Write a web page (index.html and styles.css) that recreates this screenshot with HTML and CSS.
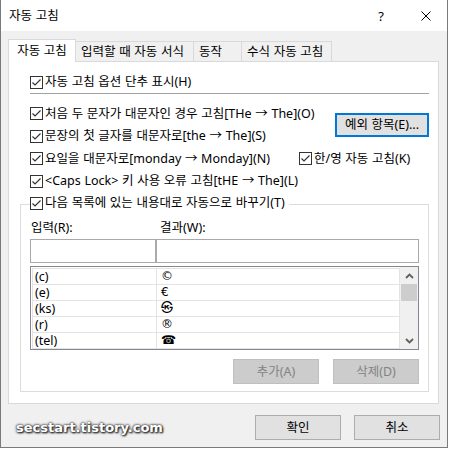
FILE: index.html
```html
<!DOCTYPE html>
<html lang="ko">
<head>
<meta charset="utf-8">
<title>자동 고침</title>
<link rel="stylesheet" href="styles.css">
</head>
<body>
<div class="window">
  <div class="titlebar">
    <span class="title">자동 고침</span>
    <span class="help">?</span>
    <svg class="close" width="10" height="10" viewBox="0 0 10 10"><path d="M0.5 0.5 L9.5 9.5 M9.5 0.5 L0.5 9.5" stroke="#000" stroke-width="1" fill="none"/></svg>
  </div>
  <div class="content">
    <div class="tabs">
      <div class="tab active">자동 고침</div>
      <div class="tab t2">입력할 때 자동 서식</div>
      <div class="tab t3">동작</div>
      <div class="tab t4">수식 자동 고침</div>
    </div>
    <div class="panel">
      <label class="cb r1"><svg class="box" width="13" height="13" viewBox="0 0 13 13"><rect x="0.5" y="0.5" width="12" height="12" fill="#fff" stroke="#333"/><path d="M2.5 6.5 L5 9 L10.5 3.5" stroke="#333" stroke-width="1.2" fill="none"/></svg><span>자동 고침 옵션 단추 표시(H)</span></label>
      <div class="sep"></div>
      <div class="pair">
        <div class="col">
          <label class="cb h23"><svg class="box" width="13" height="13" viewBox="0 0 13 13"><rect x="0.5" y="0.5" width="12" height="12" fill="#fff" stroke="#333"/><path d="M2.5 6.5 L5 9 L10.5 3.5" stroke="#333" stroke-width="1.2" fill="none"/></svg><span>처음 두 문자가 대문자인 경우 고침[THe → The](O)</span></label>
          <label class="cb h22"><svg class="box" width="13" height="13" viewBox="0 0 13 13"><rect x="0.5" y="0.5" width="12" height="12" fill="#fff" stroke="#333"/><path d="M2.5 6.5 L5 9 L10.5 3.5" stroke="#333" stroke-width="1.2" fill="none"/></svg><span>문장의 첫 글자를 대문자로[the → The](S)</span></label>
        </div>
        <button class="btn-exc">예외 항목(E)...</button>
      </div>
      <div class="row4">
        <label class="cb h23"><svg class="box" width="13" height="13" viewBox="0 0 13 13"><rect x="0.5" y="0.5" width="12" height="12" fill="#fff" stroke="#333"/><path d="M2.5 6.5 L5 9 L10.5 3.5" stroke="#333" stroke-width="1.2" fill="none"/></svg><span>요일을 대문자로[monday → Monday](N)</span></label>
        <label class="cb h23 hanyoung"><svg class="box" width="13" height="13" viewBox="0 0 13 13"><rect x="0.5" y="0.5" width="12" height="12" fill="#fff" stroke="#333"/><path d="M2.5 6.5 L5 9 L10.5 3.5" stroke="#333" stroke-width="1.2" fill="none"/></svg><span>한/영 자동 고침(K)</span></label>
      </div>
      <label class="cb h22"><svg class="box" width="13" height="13" viewBox="0 0 13 13"><rect x="0.5" y="0.5" width="12" height="12" fill="#fff" stroke="#333"/><path d="M2.5 6.5 L5 9 L10.5 3.5" stroke="#333" stroke-width="1.2" fill="none"/></svg><span>&lt;Caps Lock&gt; 키 사용 오류 고침[tHE → The](L)</span></label>
      <div class="group">
        <label class="cb legend"><svg class="box" width="13" height="13" viewBox="0 0 13 13"><rect x="0.5" y="0.5" width="12" height="12" fill="#fff" stroke="#333"/><path d="M2.5 6.5 L5 9 L10.5 3.5" stroke="#333" stroke-width="1.2" fill="none"/></svg><span>다음 목록에 있는 내용대로 자동으로 바꾸기(T)</span></label>
        <div class="labels"><span class="lbl1">입력(R):</span><span>결과(W):</span></div>
        <div class="inputs"><div class="in in1"></div><div class="in in2"></div></div>
        <div class="list">
          <div class="table">
            <div class="trow"><span class="c1">(c)</span><span class="c2">©</span></div>
            <div class="trow"><span class="c1">(e)</span><span class="c2">€</span></div>
            <div class="trow"><span class="c1">(ks)</span><span class="c2">㉿</span></div>
            <div class="trow"><span class="c1">(r)</span><span class="c2">®</span></div>
            <div class="trow"><span class="c1">(tel)</span><span class="c2">☎</span></div>
          </div>
          <div class="scroll">
            <div class="arrow"><svg width="9" height="6" viewBox="0 0 9 6"><path d="M1 5 L4.5 1.5 L8 5" stroke="#606060" stroke-width="1.8" fill="none"/></svg></div>
            <div class="thumb"></div>
            <div class="track"></div>
            <div class="arrow"><svg width="9" height="6" viewBox="0 0 9 6"><path d="M1 1 L4.5 4.5 L8 1" stroke="#606060" stroke-width="1.8" fill="none"/></svg></div>
          </div>
        </div>
        <div class="gbtns">
          <button class="btn dis add">추가(A)</button>
          <button class="btn dis">삭제(D)</button>
        </div>
      </div>
    </div>
    <div class="footer">
      <span class="wm">secstart.tistory.com</span>
      <button class="btn ok">확인</button>
      <button class="btn cancel">취소</button>
    </div>
  </div>
</div>
</body>
</html>
```
FILE: styles.css
```css
* { box-sizing: border-box; margin: 0; padding: 0; }
html, body { width: 449px; height: 449px; background: #fff; overflow: hidden; }
body {
  font-family: "Noto Sans", "Noto Sans CJK KR", sans-serif;
  font-size: 12.5px;
  line-height: 16px;
  word-spacing: 0.4px;
  color: #000;
}
button { font: inherit; color: inherit; word-spacing: inherit; }

.window {
  width: 448px;
  height: 448px;
  border: 1px solid #7a7a7a;
  border-top: none;
  background: #f0f0f0;
  display: flex;
  flex-direction: column;
}
.titlebar {
  height: 31px;
  flex: none;
  background: #fff;
  display: flex;
  align-items: center;
  padding-left: 8px;
}
.title { flex: 1; }
.help { width: 12px; text-align: center; margin-right: 34px; font-size: 13px; }
.close { margin-right: 16px; }

.content { padding: 8px 8px 0 7px; }

.tabs {
  display: flex;
  align-items: flex-end;
  height: 22px;
  position: relative;
  z-index: 1;
}
.tab {
  height: 20px;
  border: 1px solid #d9d9d9;
  border-bottom: none;
  background: #f0f0f0;
  margin-left: -1px;
  padding-left: 5px;
  display: flex;
  align-items: center;
  white-space: nowrap;
}
.tab.active {
  width: 68px;
  height: 23px;
  margin-left: 0;
  margin-bottom: -1px;
  background: #fff;
  padding-left: 0;
  justify-content: center;
  position: relative;
  z-index: 2;
}
.t2 { width: 119px; }
.t3 { width: 49px; }
.t4 { width: 91px; }

.panel {
  width: 431px;
  height: 343px;
  border: 1px solid #d9d9d9;
  background: #fff;
  padding: 9px 9px 0 11px;
}

.cb {
  display: flex;
  align-items: center;
  gap: 2px;
  white-space: nowrap;
}
.box { flex: none; }
.r1 { height: 22px; margin-left: 10px; }
.h22 { height: 22px; margin-left: 10px; }
.h23 { height: 23px; margin-left: 10px; }
.sep { height: 1px; background: #a0a0a0; margin: 0 0 8px 10px; }

.pair { display: flex; align-items: flex-start; }
.col { flex: 1; }
.btn-exc {
  width: 94px;
  height: 24px;
  margin-top: 11px;
  border: 2px solid #0078d7;
  background: #e1e1e1;
}

.row4 { display: grid; grid-template-columns: 279px auto; }
.row4 .hanyoung { margin-left: 0; }

.group {
  margin-top: 12px;
  border: 1px solid #dcdcdc;
  padding: 0 9px 7px 9px;
}
.legend {
  height: 22px;
  margin-top: -13px;
  width: fit-content;
  background: #fff;
  padding-right: 4px;
}
.labels { display: flex; height: 16px; margin-top: 6px; }
.lbl1 { width: 130px; padding-left: 1px; }

.inputs { display: flex; margin-top: 3px; }
.in { height: 24px; border: 1px solid #a9a9a9; background: #fff; }
.in1 { width: 126px; }
.in2 { width: 263px; }

.list {
  margin-top: 3px;
  height: 84px;
  border: 1px solid #828790;
  display: flex;
}
.table {
  width: 369px;
  padding: 1px 0 0 1px;
}
.trow {
  display: flex;
  height: 16px;
  border-top: 1px solid #e3e3e3;
}
.trow:last-child { height: 17px; border-bottom: 1px solid #e3e3e3; }
.trow span { line-height: 15px; }
.c1 { width: 125px; padding-left: 2px; border-left: 1px solid #e3e3e3; border-right: 1px solid #e3e3e3; }
.c2 {
  flex: 1;
  padding-left: 4px;
  border-right: 1px solid #e3e3e3;
  font-family: "DejaVu Sans", "Noto Sans CJK KR", sans-serif;
  font-size: 12px;
}

.scroll {
  flex: 1;
  background: #f0f0f0;
  display: flex;
  flex-direction: column;
}
.arrow { height: 17px; display: flex; align-items: center; justify-content: center; }
.thumb { height: 17px; margin: 0 1px; background: #cdcdcd; }
.track { flex: 1; }

.gbtns { display: flex; justify-content: flex-end; gap: 14px; margin-top: 9px; }
.btn {
  width: 86px;
  height: 25px;
  border: 1px solid #adadad;
  background: #e1e1e1;
}
.btn.dis { background: #cccccc; border-color: #bfbfbf; color: #838383; }

.footer {
  display: flex;
  align-items: center;
  margin-top: 11px;
}
.wm {
  margin-left: 8px;
  margin-right: auto;
  font-family: "DejaVu Sans", sans-serif;
  font-weight: bold;
  font-size: 13px;
  word-spacing: 0;
  color: #fff;
  text-shadow: 0 0 2px #333, 0 0 3px #333, 1px 1px 2px #000;
}
.ok { margin-right: 13px; }
.cancel { margin-right: -1px; }
```
